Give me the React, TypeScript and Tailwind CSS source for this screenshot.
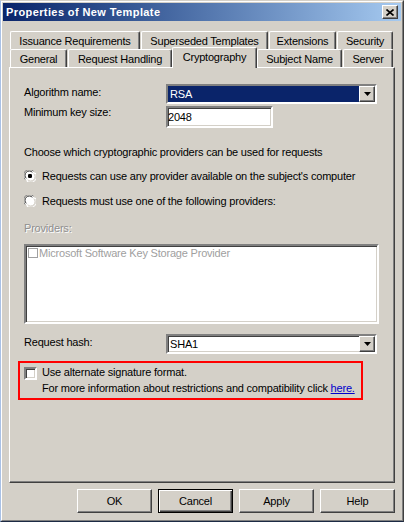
import React from 'react';

const sunken =
  'border-2 border-t-[#808080] border-l-[#808080] border-b-white border-r-white shadow-[inset_1px_1px_0_#404040,inset_-1px_-1px_0_#d4d0c8]';
const raised =
  'border border-t-white border-l-white border-b-[#404040] border-r-[#404040] shadow-[inset_-1px_-1px_0_#808080]';

const ArrowButton = () => (
  <div className={`w-[16px] h-[16px] shrink-0 bg-[#d4d0c8] flex items-center justify-center ${raised}`}>
    <svg width="7" height="4" viewBox="0 0 7 4">
      <polygon points="0,0 7,0 3.5,4" fill="#000" />
    </svg>
  </div>
);

const Combo = ({ value, selected }: { value: string; selected?: boolean }) => (
  <div className={`w-[211px] h-[20px] bg-white flex ${sunken}`}>
    <div
      className={`flex-1 flex items-center pl-[2px] ${
        selected ? 'bg-[#0a246a] text-white' : 'text-black'
      }`}
    >
      {value}
    </div>
    <ArrowButton />
  </div>
);

const Radio = ({ checked }: { checked?: boolean }) => (
  <svg width="12" height="12" viewBox="0 0 12 12" className="shrink-0">
    <circle cx="6" cy="6" r="5.5" fill="#fff" />
    <path d="M1.2 9.5 A5.5 5.5 0 0 1 9.5 1.2" fill="none" stroke="#808080" strokeWidth="1" />
    <path d="M2.3 8.4 A4.3 4.3 0 0 1 8.4 2.3" fill="none" stroke="#404040" strokeWidth="1" />
    <path d="M10.8 2.5 A5.5 5.5 0 0 1 2.5 10.8" fill="none" stroke="#ffffff" strokeWidth="1" />
    <path d="M9.7 3.6 A4.3 4.3 0 0 1 3.6 9.7" fill="none" stroke="#d4d0c8" strokeWidth="1" />
    {checked && <rect x="4" y="4" width="4" height="4" rx="1.2" fill="#000" />}
  </svg>
);

const Tab = ({ label, w, selected }: { label: string; w: number; selected?: boolean }) => (
  <div
    style={{ width: w }}
    className={`shrink-0 bg-[#d4d0c8] flex justify-center pt-[2px] border-l border-t border-r border-l-white border-t-white border-r-[#404040] rounded-t-[2px] shadow-[inset_-1px_0_0_#808080] ${
      selected ? 'h-[21px] mb-[-1px] relative z-10' : 'h-[18px]'
    }`}
  >
    {label}
  </div>
);

const Button = ({ label, dflt }: { label: string; dflt?: boolean }) => (
  <div
    className={`w-[75px] h-[24px] flex items-center justify-center bg-[#d4d0c8] ${
      dflt
        ? 'border border-black shadow-[inset_1px_1px_0_#fff,inset_-1px_-1px_0_#404040,inset_-2px_-2px_0_#808080]'
        : raised
    }`}
  >
    {label}
  </div>
);

export default function App() {
  return (
    <div className="w-[404px] h-[522px] border border-t-[#d4d0c8] border-l-[#a9c1e6] border-r-[#404040] border-b-[#1c2a44] bg-[#d4d0c8] font-['Liberation_Sans',Arial,sans-serif] text-[11px] leading-[14px] tracking-[-0.2px] text-black">
      <div className="w-full h-full border border-t-white border-l-white border-r-[#808080] border-b-[#808080] p-[1px] flex flex-col">
        {/* title bar */}
        <div className="h-[18px] shrink-0 bg-linear-to-r from-[#0a246a] to-[#a6caf0] flex items-center pl-[3px] pr-[3px]">
          <span className="flex-1 text-white font-bold tracking-[0.4px]">Properties of New Template</span>
          <div className={`w-[16px] h-[14px] bg-[#d4d0c8] flex items-center justify-center ${raised}`}>
            <svg width="8" height="7" viewBox="0 0 8 7">
              <path d="M0.5 0.5 L7.5 6.5 M7.5 0.5 L0.5 6.5" stroke="#000" strokeWidth="1.6" />
            </svg>
          </div>
        </div>

        {/* tabs */}
        <div className="mt-[10px] px-[6px] flex flex-col">
          <div className="flex gap-[1px] ml-[1px] h-[18px]">
            <Tab label="Issuance Requirements" w={130} />
            <Tab label="Superseded Templates" w={127} />
            <Tab label="Extensions" w={67} />
            <Tab label="Security" w={56} />
          </div>
          <div className="flex items-end ml-[1px] h-[18px]">
            <Tab label="General" w={57} />
            <div className="w-[1px]" />
            <Tab label="Request Handling" w={104} />
            <Tab label="Cryptography" w={85} selected />
            <Tab label="Subject Name" w={85} />
            <div className="w-[1px]" />
            <Tab label="Server" w={50} />
          </div>

          {/* panel */}
          <div className="h-[416px] border border-t-white border-l-white border-r-[#404040] border-b-[#404040] shadow-[inset_-1px_-1px_0_#808080] pt-[16px] pl-[14px] flex flex-col">
            <div className="flex h-[20px]">
              <div className="w-[142px] mt-[1px]">Algorithm name:</div>
              <Combo value="RSA" selected />
            </div>
            <div className="flex h-[22px] mt-[2px]">
              <div className="w-[142px] mt-[-1px]">Minimum key size:</div>
              <div className={`w-[107px] h-[22px] bg-white flex items-center ${sunken}`}>2048</div>
            </div>
            <div className="mt-[17px]">Choose which cryptographic providers can be used for requests</div>
            <div className="mt-[10px] flex items-center gap-[6px]">
              <Radio checked />
              <span>Requests can use any provider available on the subject's computer</span>
            </div>
            <div className="mt-[11px] flex items-center gap-[6px]">
              <Radio />
              <span>Requests must use one of the following providers:</span>
            </div>
            <div className="mt-[13px] text-[#8f8f8f] [text-shadow:1px_1px_0_#ffffff]">Providers:</div>
            <div className={`mt-[9px] w-[355px] h-[80px] bg-white pl-[2px] ${sunken}`}>
              <div className="flex items-start gap-[1px] text-[#a0a0a0]">
                <div className="w-[10px] h-[10px] mt-[2px] border border-[#a0a0a0] bg-white" />
                <span>Microsoft Software Key Storage Provider</span>
              </div>
            </div>
            <div className="flex h-[20px] mt-[10px]">
              <div className="w-[142px] mt-[1px]">Request hash:</div>
              <Combo value="SHA1" />
            </div>
            <div className="mt-[7px] ml-[-6px] w-[345px] h-[39px] border-2 border-[#ff0000] pt-[2px] pl-[4px] flex gap-[5px]">
              <div className={`w-[13px] h-[13px] mt-[2px] bg-white shrink-0 ${sunken}`} />
              <div className="flex flex-col gap-[2px]">
                <span>Use alternate signature format.</span>
                <span>
                  For more information about restrictions and compatibility click{' '}
                  <span className="text-[#0000cc] underline">here.</span>
                </span>
              </div>
            </div>
          </div>

          {/* buttons */}
          <div className="mt-[6px] flex justify-end gap-[6px]">
            <Button label="OK" />
            <Button label="Cancel" dflt />
            <Button label="Apply" />
            <Button label="Help" />
          </div>
        </div>
      </div>
    </div>
  );
}
